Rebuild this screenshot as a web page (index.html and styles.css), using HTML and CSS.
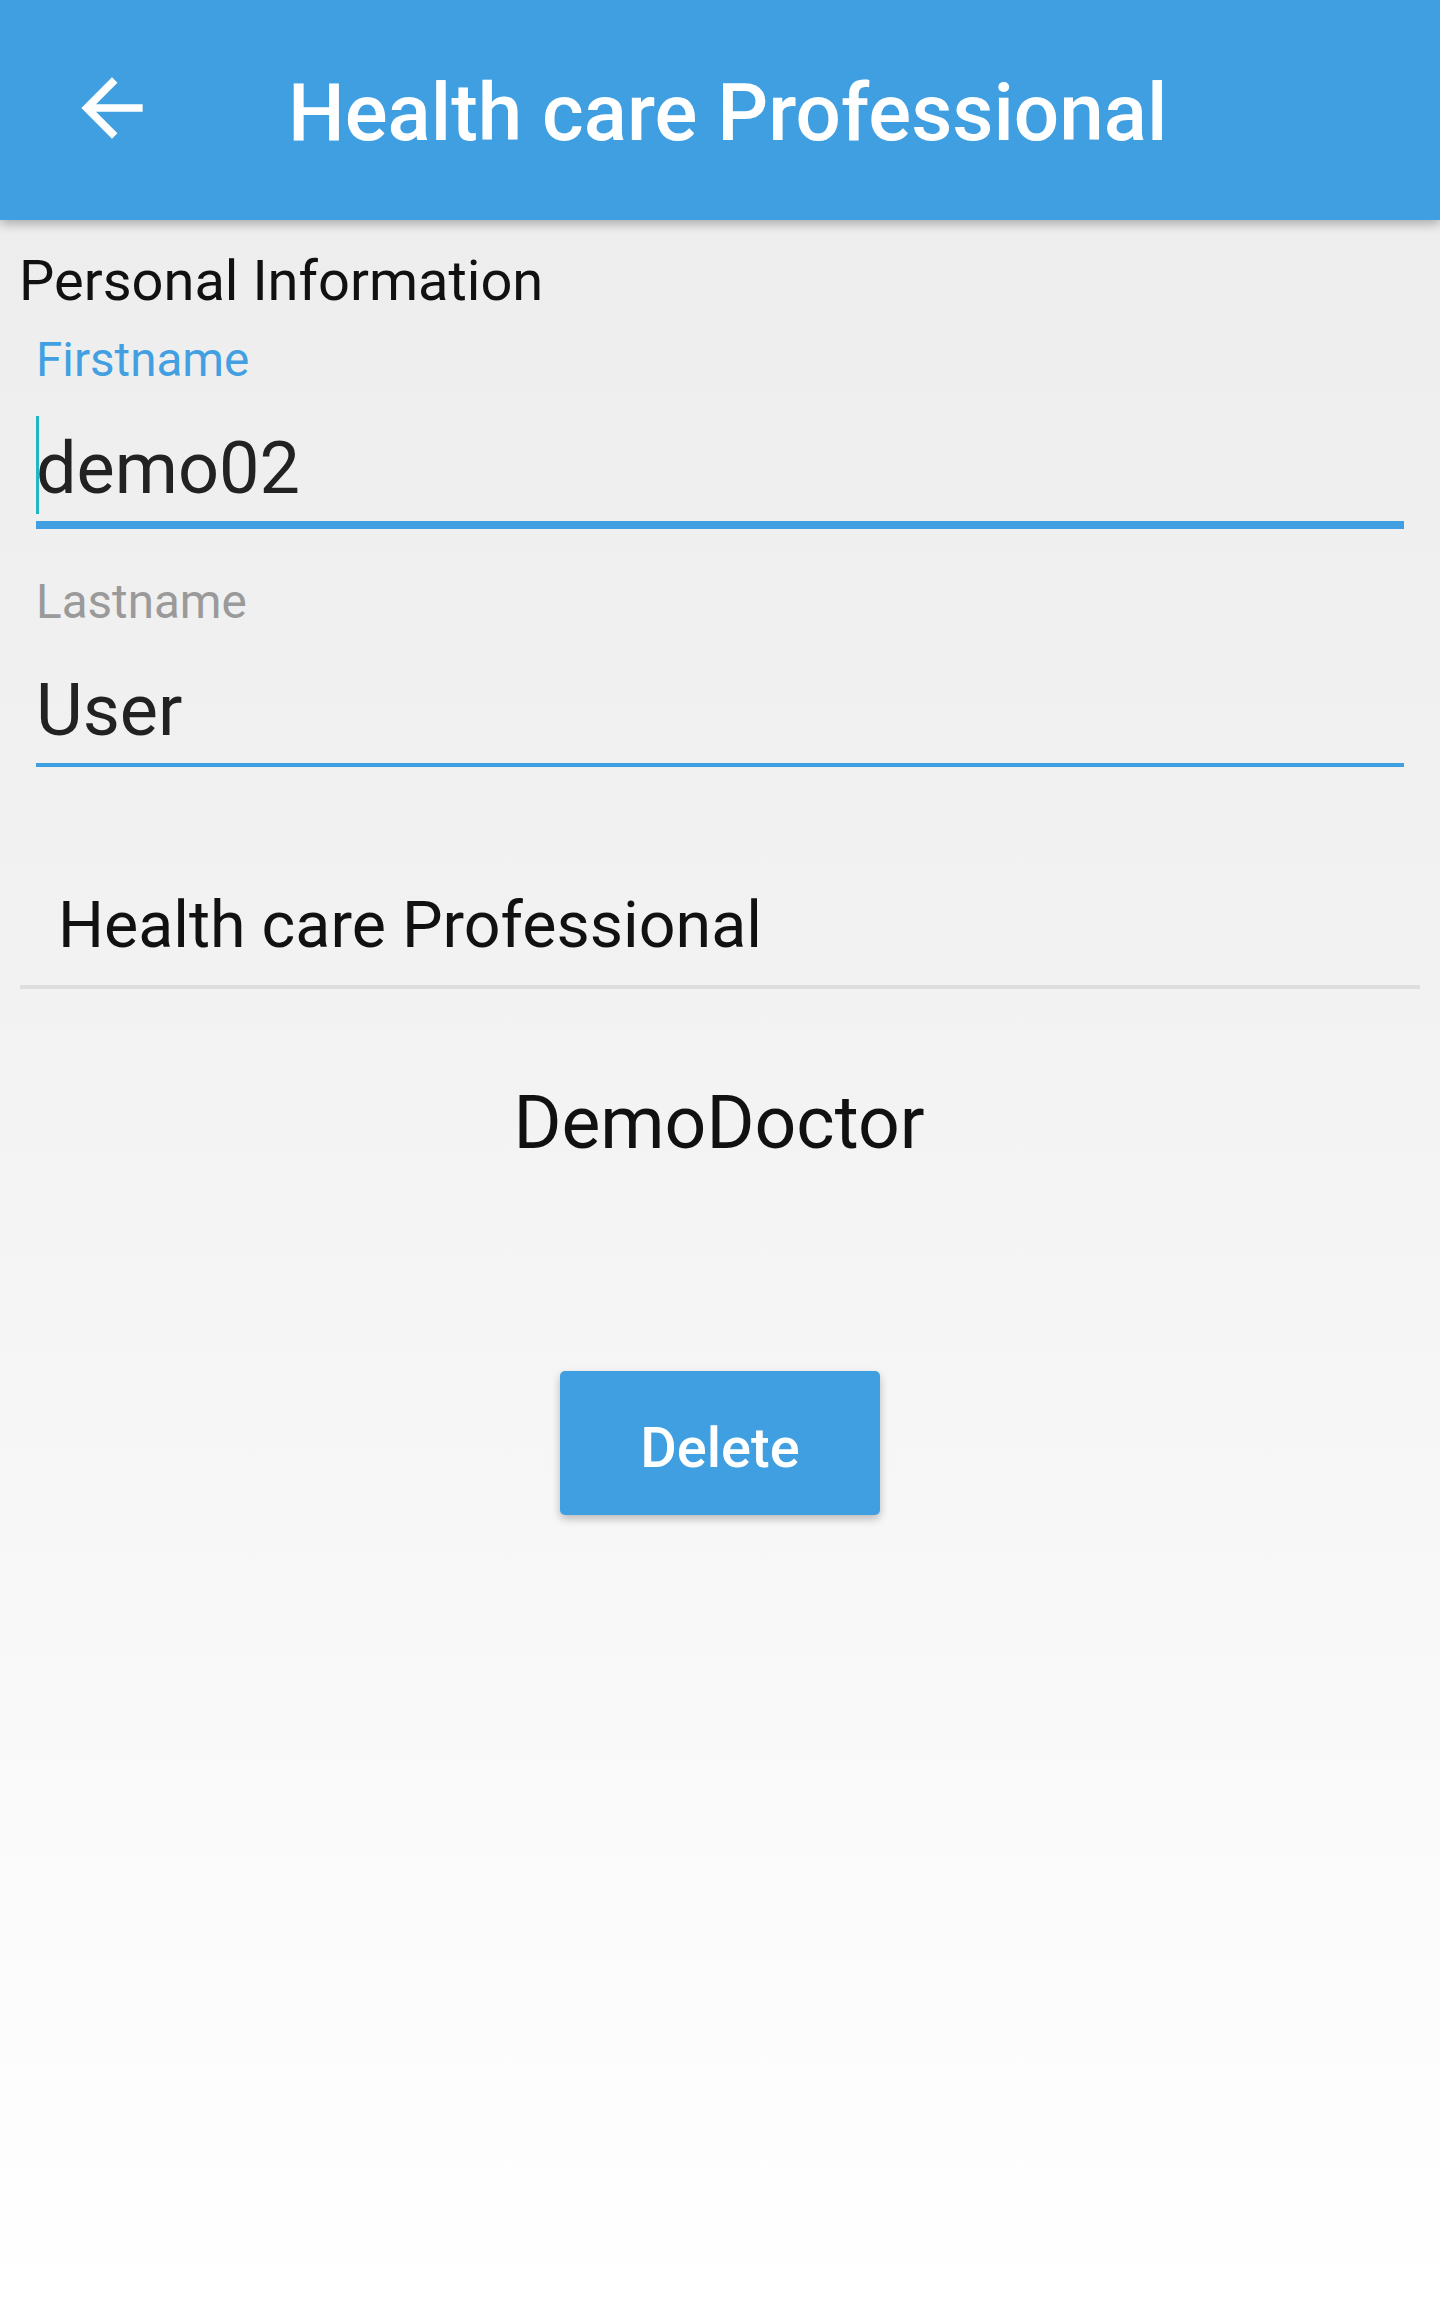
FILE: index.html
```html
<!DOCTYPE html>
<html lang="en">
<head>
<meta charset="utf-8">
<title>Health care Professional</title>
<link rel="stylesheet" href="styles.css">
</head>
<body>
<div class="screen">
  <header class="appbar">
    <svg class="back" viewBox="0 0 24 24" width="92" height="92" aria-hidden="true"><path fill="#fff" d="M20 11H7.83l5.59-5.59L12 4l-8 8 8 8 1.41-1.41L7.83 13H20v-2z"/></svg>
    <h1 class="title">Health care Professional</h1>
  </header>
  <main class="content">
    <h2 class="section-title">Personal Information</h2>
    <div class="field field-focused">
      <label class="field-label label-active">Firstname</label>
      <div class="field-value value-focused"><span class="cursor"></span>demo02</div>
    </div>
    <div class="field">
      <label class="field-label">Lastname</label>
      <div class="field-value">User</div>
    </div>
    <div class="role">Health care Professional</div>
    <div class="doctor">DemoDoctor</div>
    <div class="actions">
      <button class="btn-delete">Delete</button>
    </div>
  </main>
</div>
</body>
</html>
```
FILE: styles.css
```css
html, body {
  margin: 0;
  padding: 0;
}
body {
  font-family: Roboto, "Noto Sans", "Liberation Sans", sans-serif;
  background: linear-gradient(to bottom, #ececec 0px, #f3f3f3 1100px, #ffffff 2316px);
  min-height: 2316px;
  color: #111;
}
.screen {
  width: 1440px;
  min-height: 2316px;
}
.appbar {
  height: 220px;
  background: #409fe1;
  display: flex;
  align-items: flex-start;
  box-shadow: 0 4px 10px rgba(0, 0, 0, 0.28);
  position: relative;
  z-index: 1;
}
.back {
  display: block;
  margin: 62px 0 0 66px;
  flex: none;
}
.title {
  margin: 66px 0 0 130px;
  font-size: 80px;
  line-height: 94px;
  font-weight: 500;
  color: #fff;
}
.content {
  display: flex;
  flex-direction: column;
}
.section-title {
  margin: 28px 0 0 19px;
  font-size: 56px;
  line-height: 66px;
  font-weight: 400;
  color: #111;
}
.field {
  margin: 18px 36px 0 36px;
  display: flex;
  flex-direction: column;
}
.field + .field {
  margin-top: 45px;
}
.field-label {
  font-size: 47.6px;
  line-height: 56px;
  color: #9a9a9a;
  margin-bottom: 32px;
}
.label-active {
  color: #42a0e2;
}
.field-value {
  position: relative;
  font-size: 72px;
  line-height: 98px;
  color: #222;
  padding-bottom: 3px;
  border-bottom: 4px solid #409fe1;
}
.value-focused {
  border-bottom-width: 8px;
}
.cursor {
  position: absolute;
  left: 0;
  top: -4px;
  width: 3px;
  height: 98px;
  background: #21b6c2;
}
.role {
  margin: 120px 20px 0 20px;
  padding: 0 0 22px 38px;
  font-size: 64.5px;
  line-height: 76px;
  color: #111;
  border-bottom: 4px solid #dedede;
}
.doctor {
  margin-top: 85px;
  text-align: center;
  font-size: 73.3px;
  line-height: 98px;
  color: #111;
  padding-right: 2px;
}
.actions {
  display: flex;
  justify-content: center;
  margin-top: 199px;
}
.btn-delete {
  width: 320px;
  height: 144px;
  box-sizing: border-box;
  padding: 10px 0 0 0;
  border: none;
  border-radius: 5px;
  background: #409fe1;
  color: #fff;
  font-family: Roboto, "Noto Sans", "Liberation Sans", sans-serif;
  font-size: 56px;
  line-height: 134px;
  font-weight: 500;
  box-shadow: 0 4px 8px rgba(0, 0, 0, 0.25);
}
```
